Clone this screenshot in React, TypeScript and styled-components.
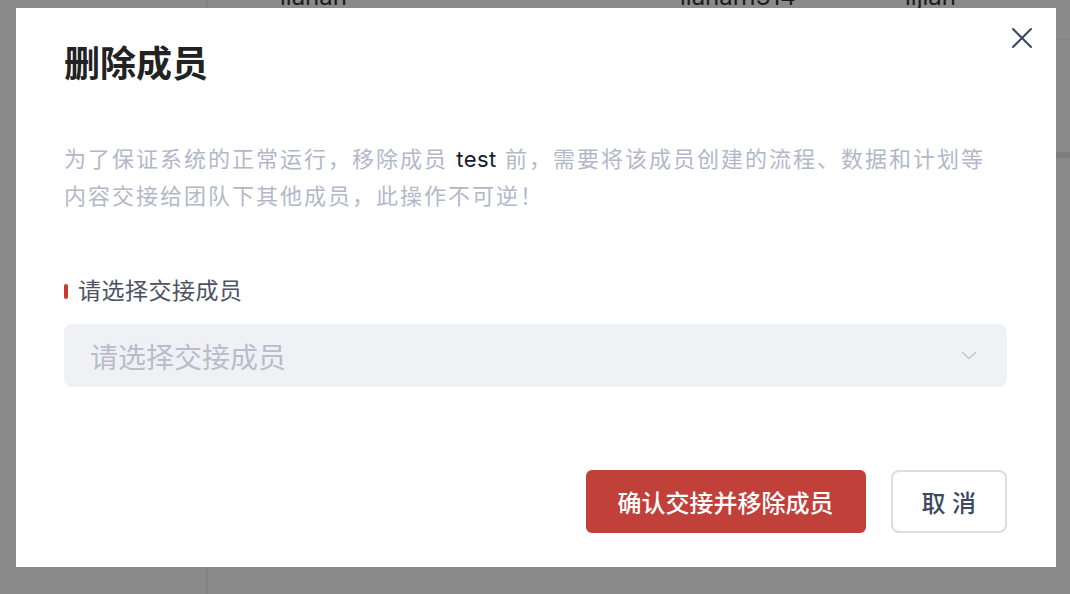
import React from "react";
import styled, { createGlobalStyle } from "styled-components";

const GlobalStyle = createGlobalStyle`
  html, body {
    margin: 0;
    padding: 0;
    height: 100%;
    overflow: hidden;
  }
  body {
    font-family: Inter, "Noto Sans CJK SC", sans-serif;
    background: #ffffff;
  }
`;

// page that sits under the mask
const Page = styled.div`
  display: flex;
  width: 100%;
  height: 100vh;
  background: #ffffff;
`;

const Sidebar = styled.div`
  width: 206px;
  flex-shrink: 0;
  border-right: 2px solid #f0f0f0;
`;

const Main = styled.div`
  flex: 1;
  display: flex;
  flex-direction: column;
`;

const TableRow = styled.div`
  display: flex;
  height: 48px;
  box-sizing: border-box;
  border-bottom: 1px solid #f4f4f4;
  margin-top: -8px;
  font-size: 24px;
  line-height: 30px;
  color: #333333;
`;

const Cell = styled.div<{ $w: number }>`
  width: ${(p) => p.$w}px;
  flex-shrink: 0;
  margin-top: -10px;
`;

const Band = styled.div`
  height: 6px;
  margin-top: 112px;
  background: #e6e8ec;
`;

const Mask = styled.div`
  position: fixed;
  inset: 0;
  background: rgba(0, 0, 0, 0.46);
  display: flex;
  justify-content: center;
  align-items: flex-start;
  padding: 8px 0 0 2px;
`;

const Modal = styled.div`
  position: relative;
  width: 1040px;
  box-sizing: border-box;
  background: #ffffff;
  padding: 33px 49px 34px 48px;
  display: flex;
  flex-direction: column;
`;

const CloseButton = styled.button`
  position: absolute;
  top: 18px;
  right: 22px;
  width: 24px;
  height: 24px;
  padding: 0;
  border: none;
  background: transparent;
  display: flex;
  align-items: center;
  justify-content: center;
  cursor: pointer;
`;

const Title = styled.h2`
  margin: 0;
  font-size: 36px;
  line-height: 46px;
  font-weight: 700;
  color: #222222;
`;

const Notice = styled.p`
  margin: 54px 0 0;
  font-size: 22px;
  line-height: 37px;
  letter-spacing: 2px;
  color: #b3b8c9;
`;

const Name = styled.span`
  color: #161b2e;
  letter-spacing: 0.5px;
`;

const Label = styled.div`
  margin-top: 60px;
  display: flex;
  align-items: center;
  gap: 10px;
  font-size: 23px;
  line-height: 32px;
  letter-spacing: 0.5px;
  color: #4d5262;
`;

const Required = styled.span`
  width: 4px;
  height: 15px;
  border-radius: 2px;
  background: #c8392f;
`;

const Select = styled.div`
  margin-top: 17px;
  height: 63px;
  box-sizing: border-box;
  border-radius: 8px;
  background: #f0f1f5;
  display: flex;
  align-items: center;
  justify-content: space-between;
  padding: 0 30px 0 26px;
`;

const Placeholder = styled.span`
  font-size: 28px;
  color: #b8bccb;
`;

const Footer = styled.div`
  margin-top: 83px;
  display: flex;
  justify-content: flex-end;
  gap: 25px;
`;

const Button = styled.button<{ $primary?: boolean }>`
  height: 63px;
  box-sizing: border-box;
  font-family: Inter, "Noto Sans CJK SC", sans-serif;
  font-size: 24px;
  font-weight: 500;
  border-radius: ${(p) => (p.$primary ? "6px" : "8px")};
  padding: ${(p) => (p.$primary ? "0 32px" : "0 29px")};
  border: ${(p) => (p.$primary ? "none" : "2px solid #dcdde0")};
  background: ${(p) => (p.$primary ? "#c2403a" : "#ffffff")};
  color: ${(p) => (p.$primary ? "#ffffff" : "#3d4962")};
  cursor: pointer;
`;

const CloseIcon = () => (
  <svg width="22" height="22" viewBox="0 0 22 22" fill="none">
    <path d="M2 2L20 20M20 2L2 20" stroke="#3b4661" strokeWidth="2" strokeLinecap="round" />
  </svg>
);

const Chevron = () => (
  <svg width="16" height="9" viewBox="0 0 16 9" fill="none">
    <path d="M1.5 1.5L8 7.5L14.5 1.5" stroke="#c4c6cd" strokeWidth="1.6" strokeLinecap="round" strokeLinejoin="round" />
  </svg>
);

const App = () => {
  return (
    <>
      <GlobalStyle />
      <Page>
        <Sidebar />
        <Main>
          <TableRow>
            <Cell $w={72} />
            <Cell $w={400}>lianan</Cell>
            <Cell $w={225}>lianan1314</Cell>
            <Cell $w={150}>lijian</Cell>
          </TableRow>
          <Band />
        </Main>
      </Page>
      <Mask>
        <Modal>
          <CloseButton aria-label="关闭">
            <CloseIcon />
          </CloseButton>
          <Title>删除成员</Title>
          <Notice>
            为了保证系统的正常运行，移除成员 <Name>test</Name> 前，需要将该成员创建的流程、数据和计划等
            <br />
            内容交接给团队下其他成员，此操作不可逆！
          </Notice>
          <Label>
            <Required />
            请选择交接成员
          </Label>
          <Select>
            <Placeholder>请选择交接成员</Placeholder>
            <Chevron />
          </Select>
          <Footer>
            <Button $primary>确认交接并移除成员</Button>
            <Button>取 消</Button>
          </Footer>
        </Modal>
      </Mask>
    </>
  );
};

export default App;
